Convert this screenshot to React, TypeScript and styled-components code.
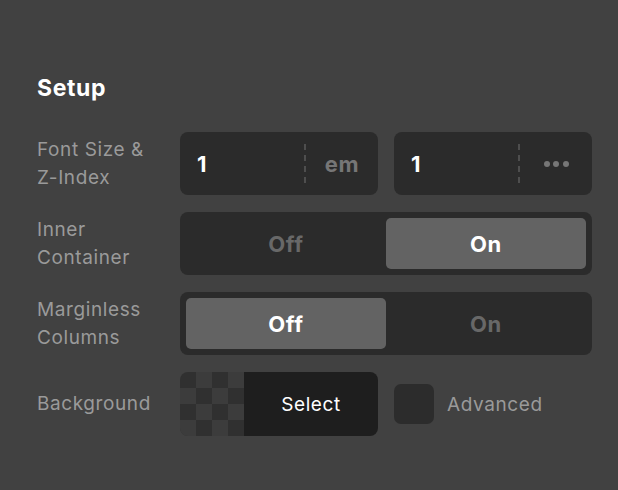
import styled, { createGlobalStyle } from 'styled-components';

const GlobalStyle = createGlobalStyle`
  html, body {
    margin: 0;
    background: #414141;
  }
  body {
    font-family: Inter, "Noto Sans", sans-serif;
    -webkit-font-smoothing: antialiased;
  }
`

const Panel = styled.div`
  padding: 75px 26px 40px 37px;
`

const Title = styled.h2`
  margin: 0 0 30px;
  font-size: 23px;
  line-height: 27px;
  font-weight: 700;
  color: #ffffff;
  letter-spacing: 0.6px;
`

const Grid = styled.div`
  display: grid;
  grid-template-columns: 143px 412px;
  row-gap: 17px;
  align-items: center;
`

const Label = styled.div`
  font-size: 19px;
  line-height: 28px;
  color: #9a9a9a;
  letter-spacing: 0.6px;
  white-space: nowrap;
`

const Pair = styled.div`
  display: flex;
  gap: 16px;
`

const InputBox = styled.div`
  flex: 1;
  height: 63px;
  display: flex;
  align-items: center;
  background: #2b2b2b;
  border-radius: 8px;
  padding-left: 17px;
  box-sizing: border-box;
`

const Value = styled.div`
  flex: 1;
  font-size: 22px;
  font-weight: 700;
  color: #ffffff;
`

const Divider = styled.div`
  width: 0;
  height: 39px;
  border-left: 2px dashed #4e4e4e;
`

const Unit = styled.div`
  width: 72px;
  display: flex;
  justify-content: center;
  align-items: center;
  gap: 3.5px;
  font-size: 22px;
  font-weight: 700;
  color: #767676;
  letter-spacing: 0.6px;
`

const Dot = styled.span`
  width: 6px;
  height: 6px;
  border-radius: 50%;
  background: #767676;
`

const Toggle = styled.div`
  height: 63px;
  display: flex;
  padding: 6px;
  box-sizing: border-box;
  background: #2b2b2b;
  border-radius: 8px;
`

const ToggleOption = styled.div<{ $active?: boolean }>`
  flex: 1;
  display: flex;
  align-items: center;
  justify-content: center;
  border-radius: 5px;
  font-size: 22px;
  font-weight: 700;
  letter-spacing: 0.6px;
  background: ${({ $active }) => ($active ? '#636363' : 'transparent')};
  color: ${({ $active }) => ($active ? '#ffffff' : '#686868')};
`

const BgRow = styled.div`
  display: flex;
  align-items: center;
`

const BgPicker = styled.div`
  width: 198px;
  height: 64px;
  display: flex;
  border-radius: 8px;
  overflow: hidden;
`

const Checker = styled.div`
  width: 64px;
  height: 64px;
  background-color: #303030;
  background-image:
    linear-gradient(45deg, #3c3c3c 25%, transparent 25%, transparent 75%, #3c3c3c 75%),
    linear-gradient(45deg, #3c3c3c 25%, transparent 25%, transparent 75%, #3c3c3c 75%);
  background-size: 32px 32px;
  background-position: 0 0, 16px 16px;
`

const SelectButton = styled.div`
  flex: 1;
  display: flex;
  align-items: center;
  justify-content: center;
  background: #1e1e1e;
  color: #ffffff;
  font-size: 19px;
  letter-spacing: 0.6px;
`

const Checkbox = styled.div`
  width: 40px;
  height: 40px;
  margin-left: 16px;
  background: #2c2c2c;
  border-radius: 7px;
`

const CheckLabel = styled.span`
  margin-left: 13px;
  font-size: 19px;
  color: #9a9a9a;
  letter-spacing: 0.6px;
`

export default function App() {
  return (
    <Panel>
      <GlobalStyle />
      <Title>Setup</Title>
      <Grid>
        <Label>Font Size &amp;<br />Z-Index</Label>
        <Pair>
          <InputBox>
            <Value>1</Value>
            <Divider />
            <Unit>em</Unit>
          </InputBox>
          <InputBox>
            <Value>1</Value>
            <Divider />
            <Unit><Dot /><Dot /><Dot /></Unit>
          </InputBox>
        </Pair>

        <Label>Inner<br />Container</Label>
        <Toggle>
          <ToggleOption>Off</ToggleOption>
          <ToggleOption $active>On</ToggleOption>
        </Toggle>

        <Label>Marginless<br />Columns</Label>
        <Toggle>
          <ToggleOption $active>Off</ToggleOption>
          <ToggleOption>On</ToggleOption>
        </Toggle>

        <Label>Background</Label>
        <BgRow>
          <BgPicker>
            <Checker />
            <SelectButton>Select</SelectButton>
          </BgPicker>
          <Checkbox />
          <CheckLabel>Advanced</CheckLabel>
        </BgRow>
      </Grid>
    </Panel>
  )
}
